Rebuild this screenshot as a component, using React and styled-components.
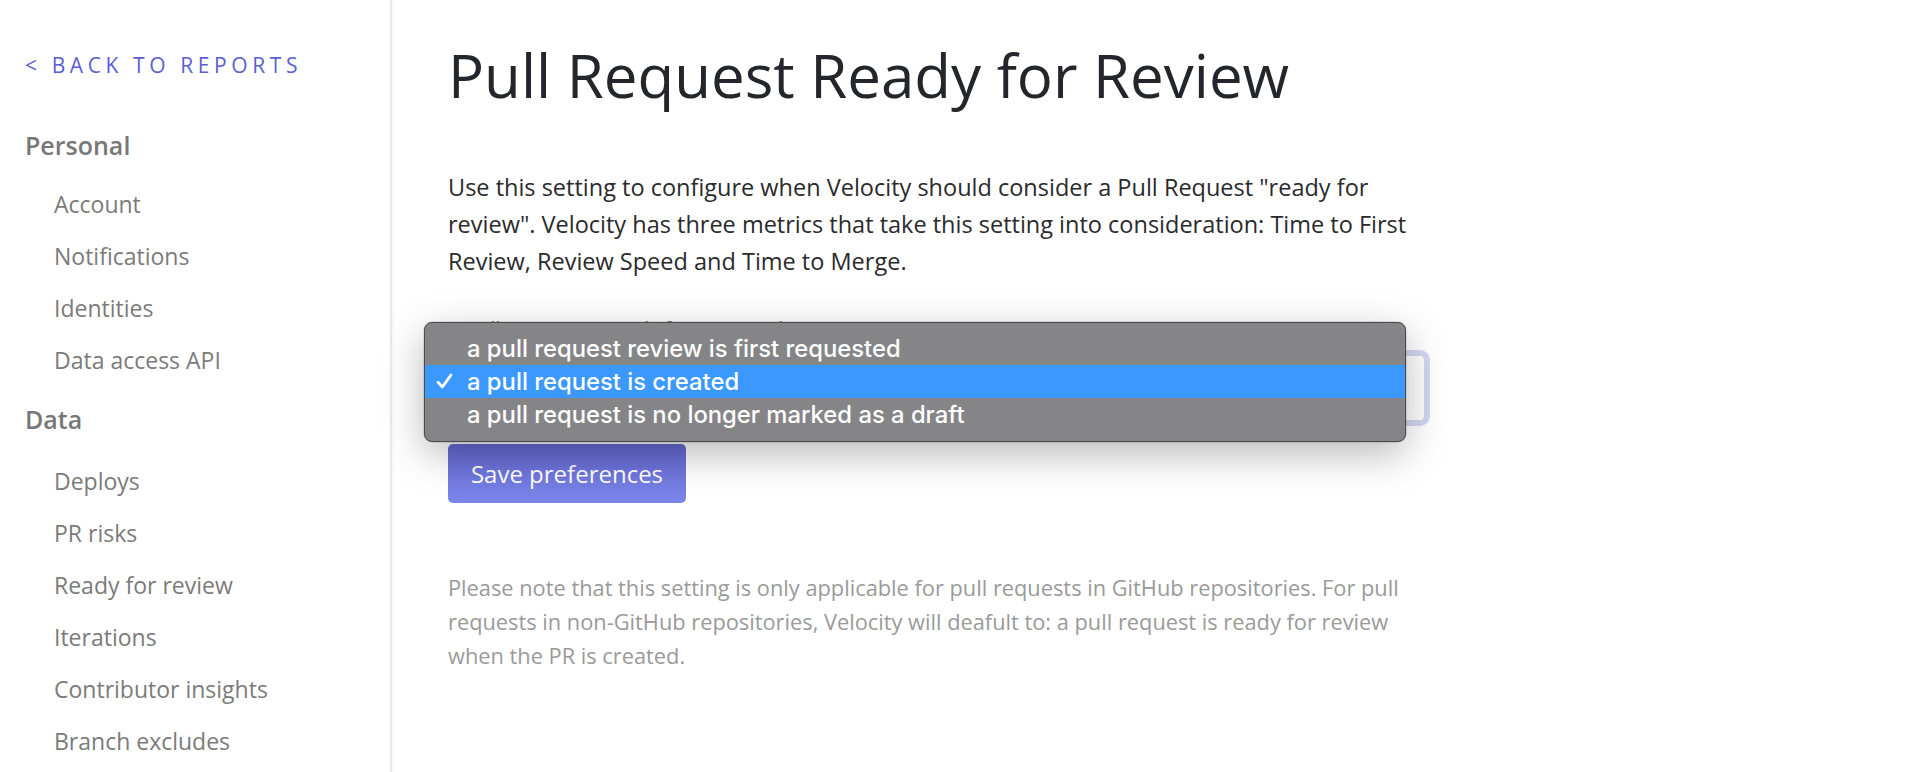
import React from 'react';
import styled, { createGlobalStyle } from 'styled-components';

const GlobalStyle = createGlobalStyle`
  html, body {
    margin: 0;
    padding: 0;
    background: #fff;
  }
  body {
    font-family: "Open Sans", "Noto Sans", "Liberation Sans", sans-serif;
    -webkit-font-smoothing: antialiased;
  }
  * {
    box-sizing: border-box;
  }
`;

const Page = styled.div`
  display: flex;
  height: 100vh;
  overflow: hidden;
`;

const Sidebar = styled.nav`
  width: 392px;
  flex-shrink: 0;
  padding: 53px 0 0 25px;
  border-right: 2px solid #e9e9e9;
  box-shadow: 1px 0 3px rgba(0, 0, 0, 0.05);
  display: flex;
  flex-direction: column;
`;

const BackLink = styled.a`
  display: block;
  font-size: 21px;
  line-height: 24px;
  letter-spacing: 4.6px;
  text-transform: uppercase;
  color: #5a60d2;
  text-decoration: none;
  margin-bottom: 53px;
`;

const SectionTitle = styled.div`
  font-size: 25px;
  line-height: 30px;
  font-weight: 600;
  color: #777;
  margin-top: ${(p) => (p.$first ? '0' : '18px')};
  margin-bottom: ${(p) => (p.$first ? '18px' : '21px')};
`;

const NavItem = styled.a`
  display: block;
  padding-left: 29px;
  font-size: 23px;
  line-height: 52px;
  color: #7b7b7b;
  text-decoration: none;
`;

const Main = styled.main`
  flex: 1;
  padding: 38px 0 0 56px;
`;

const Title = styled.h1`
  margin: 0 0 57px;
  font-size: 60px;
  line-height: 74px;
  font-weight: 400;
  color: #23262a;
`;

const Intro = styled.p`
  margin: 0 0 37px;
  font-size: 23.5px;
  line-height: 37px;
  color: #2a2a2c;
  white-space: nowrap;
`;

const Label = styled.label`
  display: block;
  font-size: 20px;
  line-height: 24px;
  color: #777;
  margin-bottom: 14px;
`;

const SelectWrap = styled.div`
  position: relative;
  width: 977px;
  height: 66px;
  margin-bottom: 23px;
`;

const SelectBox = styled.div`
  height: 100%;
  border: 1px solid #d6d6e4;
  border-radius: 5px;
  background: #fff;
  box-shadow: 0 0 0 5px rgba(160, 163, 226, 0.45);
`;

const Popup = styled.ul`
  position: absolute;
  left: -24px;
  top: -33px;
  width: 982px;
  margin: 0;
  padding: 9px 0 10px;
  list-style: none;
  background: #858588;
  border: 1px solid #4b4b4d;
  border-radius: 8px;
  box-shadow: 0 12px 40px rgba(0, 0, 0, 0.28), 0 0 0 0.5px rgba(0, 0, 0, 0.2);
  font-family: Inter, "Liberation Sans", sans-serif;
`;

const Option = styled.li`
  position: relative;
  height: 33px;
  padding-left: 42px;
  display: flex;
  align-items: center;
  font-size: 23.8px;
  font-weight: 500;
  color: #fff;
  background: ${(p) => (p.$selected ? '#3a98fe' : 'transparent')};
`;

const Check = styled.svg`
  position: absolute;
  left: 10px;
  top: 7px;
  width: 19px;
  height: 19px;
`;

const SaveButton = styled.button`
  display: block;
  width: 238px;
  height: 59px;
  border: none;
  border-radius: 5px;
  background: linear-gradient(180deg, #6467cf 0%, #7b86ea 100%);
  color: #fff;
  font-family: inherit;
  font-size: 24px;
  cursor: pointer;
  margin-bottom: 68px;
`;

const Note = styled.p`
  margin: 0;
  font-size: 21.8px;
  line-height: 34px;
  color: #9a9a9a;
  white-space: nowrap;
`;

const personalLinks = ['Account', 'Notifications', 'Identities', 'Data access API'];
const dataLinks = [
  'Deploys',
  'PR risks',
  'Ready for review',
  'Iterations',
  'Contributor insights',
  'Branch excludes',
];

const options = [
  'a pull request review is first requested',
  'a pull request is created',
  'a pull request is no longer marked as a draft',
];

export default function App() {
  return (
    <Page>
      <GlobalStyle />
      <Sidebar>
        <BackLink href="#">&lt; Back to reports</BackLink>
        <SectionTitle $first>Personal</SectionTitle>
        {personalLinks.map((l) => (
          <NavItem key={l} href="#">{l}</NavItem>
        ))}
        <SectionTitle>Data</SectionTitle>
        {dataLinks.map((l) => (
          <NavItem key={l} href="#">{l}</NavItem>
        ))}
      </Sidebar>
      <Main>
        <Title>Pull Request Ready for Review</Title>
        <Intro>
          Use this setting to configure when Velocity should consider a Pull Request "ready for
          <br />
          review". Velocity has three metrics that take this setting into consideration: Time to First
          <br />
          Review, Review Speed and Time to Merge.
        </Intro>
        <Label>A Pull Request is ready for review when</Label>
        <SelectWrap>
          <SelectBox />
          <Popup>
            {options.map((o, i) => (
              <Option key={o} $selected={i === 1}>
                {i === 1 && (
                  <Check viewBox="0 0 19 19">
                    <path d="M3 10.2 L7.4 15 L16 3" fill="none" stroke="#fff" strokeWidth="2.8" strokeLinecap="round" strokeLinejoin="round" />
                  </Check>
                )}
                {o}
              </Option>
            ))}
          </Popup>
        </SelectWrap>
        <SaveButton>Save preferences</SaveButton>
        <Note>
          Please note that this setting is only applicable for pull requests in GitHub repositories. For pull
          <br />
          requests in non-GitHub repositories, Velocity will deafult to: a pull request is ready for review
          <br />
          when the PR is created.
        </Note>
      </Main>
    </Page>
  );
}
